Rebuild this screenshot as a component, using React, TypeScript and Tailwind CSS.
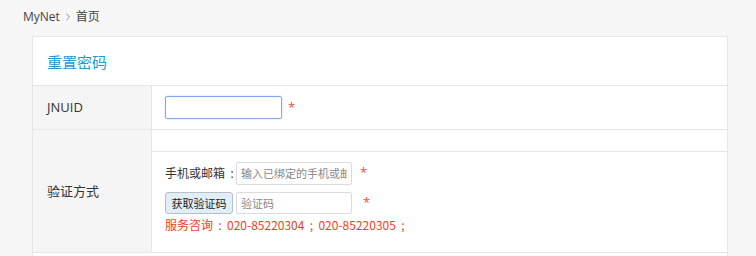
import { ChevronRight } from 'lucide-react'

const font = { fontFamily: '"Open Sans", "Noto Sans CJK SC", sans-serif' }

const Star = ({ className = '' }: { className?: string }) => (
  <span className={`text-[#f04a3a] text-[13px] leading-none ${className}`}>*</span>
)

// 全角标点，居中
const Punct = ({ ch }: { ch: string }) => (
  <span className="inline-block w-[14px] text-center">{ch}</span>
)

const App = () => {
  return (
    <div className="min-h-screen bg-[#f7f7f7] text-[#333]" style={font}>
      <div className="h-[36px] flex items-center pl-[23px] pb-[2px] text-[12px] leading-none">
        <span className="text-[#444]">MyNet</span>
        <ChevronRight className="w-[12px] h-[12px] mx-[2px] text-[#777]" strokeWidth={1.6} />
        <span className="text-[#444]">首页</span>
      </div>

      <div className="ml-[32px] w-[696px] bg-white border border-[#e6e6e6]">
        <div className="h-[49px] flex items-center pl-[14px] border-b border-[#e6e6e6]">
          <h2 className="text-[15px] text-[#2896d2] leading-none pt-[2px]">重置密码</h2>
        </div>

        <div className="flex h-[44px] border-b border-[#e6e6e6]">
          <div className="w-[119px] shrink-0 bg-[#f5f5f5] border-r border-[#e6e6e6] flex items-center pl-[14px] text-[13px]">
            JNUID
          </div>
          <div className="flex items-center pl-[13px] pb-[1px]">
            <input
              type="text"
              className="w-[117px] h-[23px] border border-[#7fa8ee] rounded-[2px] outline-none text-[12px] px-[4px] shadow-[0_0_2px_rgba(100,150,240,0.4)]"
            />
            <Star className="ml-[6px] mt-[1px]" />
          </div>
        </div>

        <div className="flex border-b border-[#e6e6e6]">
          <div className="w-[119px] shrink-0 bg-[#f5f5f5] border-r border-[#e6e6e6] flex items-center pl-[14px] text-[13px] pt-[2px]">
            验证方式
          </div>
          <div className="flex-1 flex flex-col">
            <div className="h-[22px] border-b border-[#e6e6e6]" />
            <div className="h-[100px] pl-[13px] pt-[10px] flex flex-col">
              <div className="flex items-center h-[23px]">
                <span className="text-[12px] w-[71px] shrink-0 whitespace-nowrap">
                  手机或邮箱<Punct ch=":" />
                </span>
                <input
                  type="text"
                  placeholder="输入已绑定的手机或邮箱"
                  className="w-[116px] h-[23px] border border-[#dcdcdc] rounded-[2px] outline-none text-[11px] px-[4px] placeholder:text-[#888]"
                />
                <Star className="ml-[8px] -mt-[3px]" />
              </div>
              <div className="flex items-center h-[22px] mt-[7px]">
                <button className="w-[68px] h-[22px] mr-[3px] bg-[#e1eef7] border border-[#b8bfc6] rounded-[3px] text-[11px] text-[#222] leading-none">
                  获取验证码
                </button>
                <input
                  type="text"
                  placeholder="验证码"
                  className="w-[116px] h-[22px] border border-[#dcdcdc] rounded-[2px] outline-none text-[11px] px-[4px] placeholder:text-[#888]"
                />
                <Star className="ml-[11px] -mt-[2px]" />
              </div>
              <p className="text-[12px] text-[#f2401e] mt-[1px] leading-[20px] whitespace-nowrap [font-family:'Noto_Sans_CJK_SC',sans-serif]">
                服务咨询<Punct ch=":" />020-85220304<Punct ch=";" />020-85220305<Punct ch=";" />
              </p>
            </div>
          </div>
        </div>
        <div className="h-[40px]" />
      </div>
    </div>
  )
}

export default App
